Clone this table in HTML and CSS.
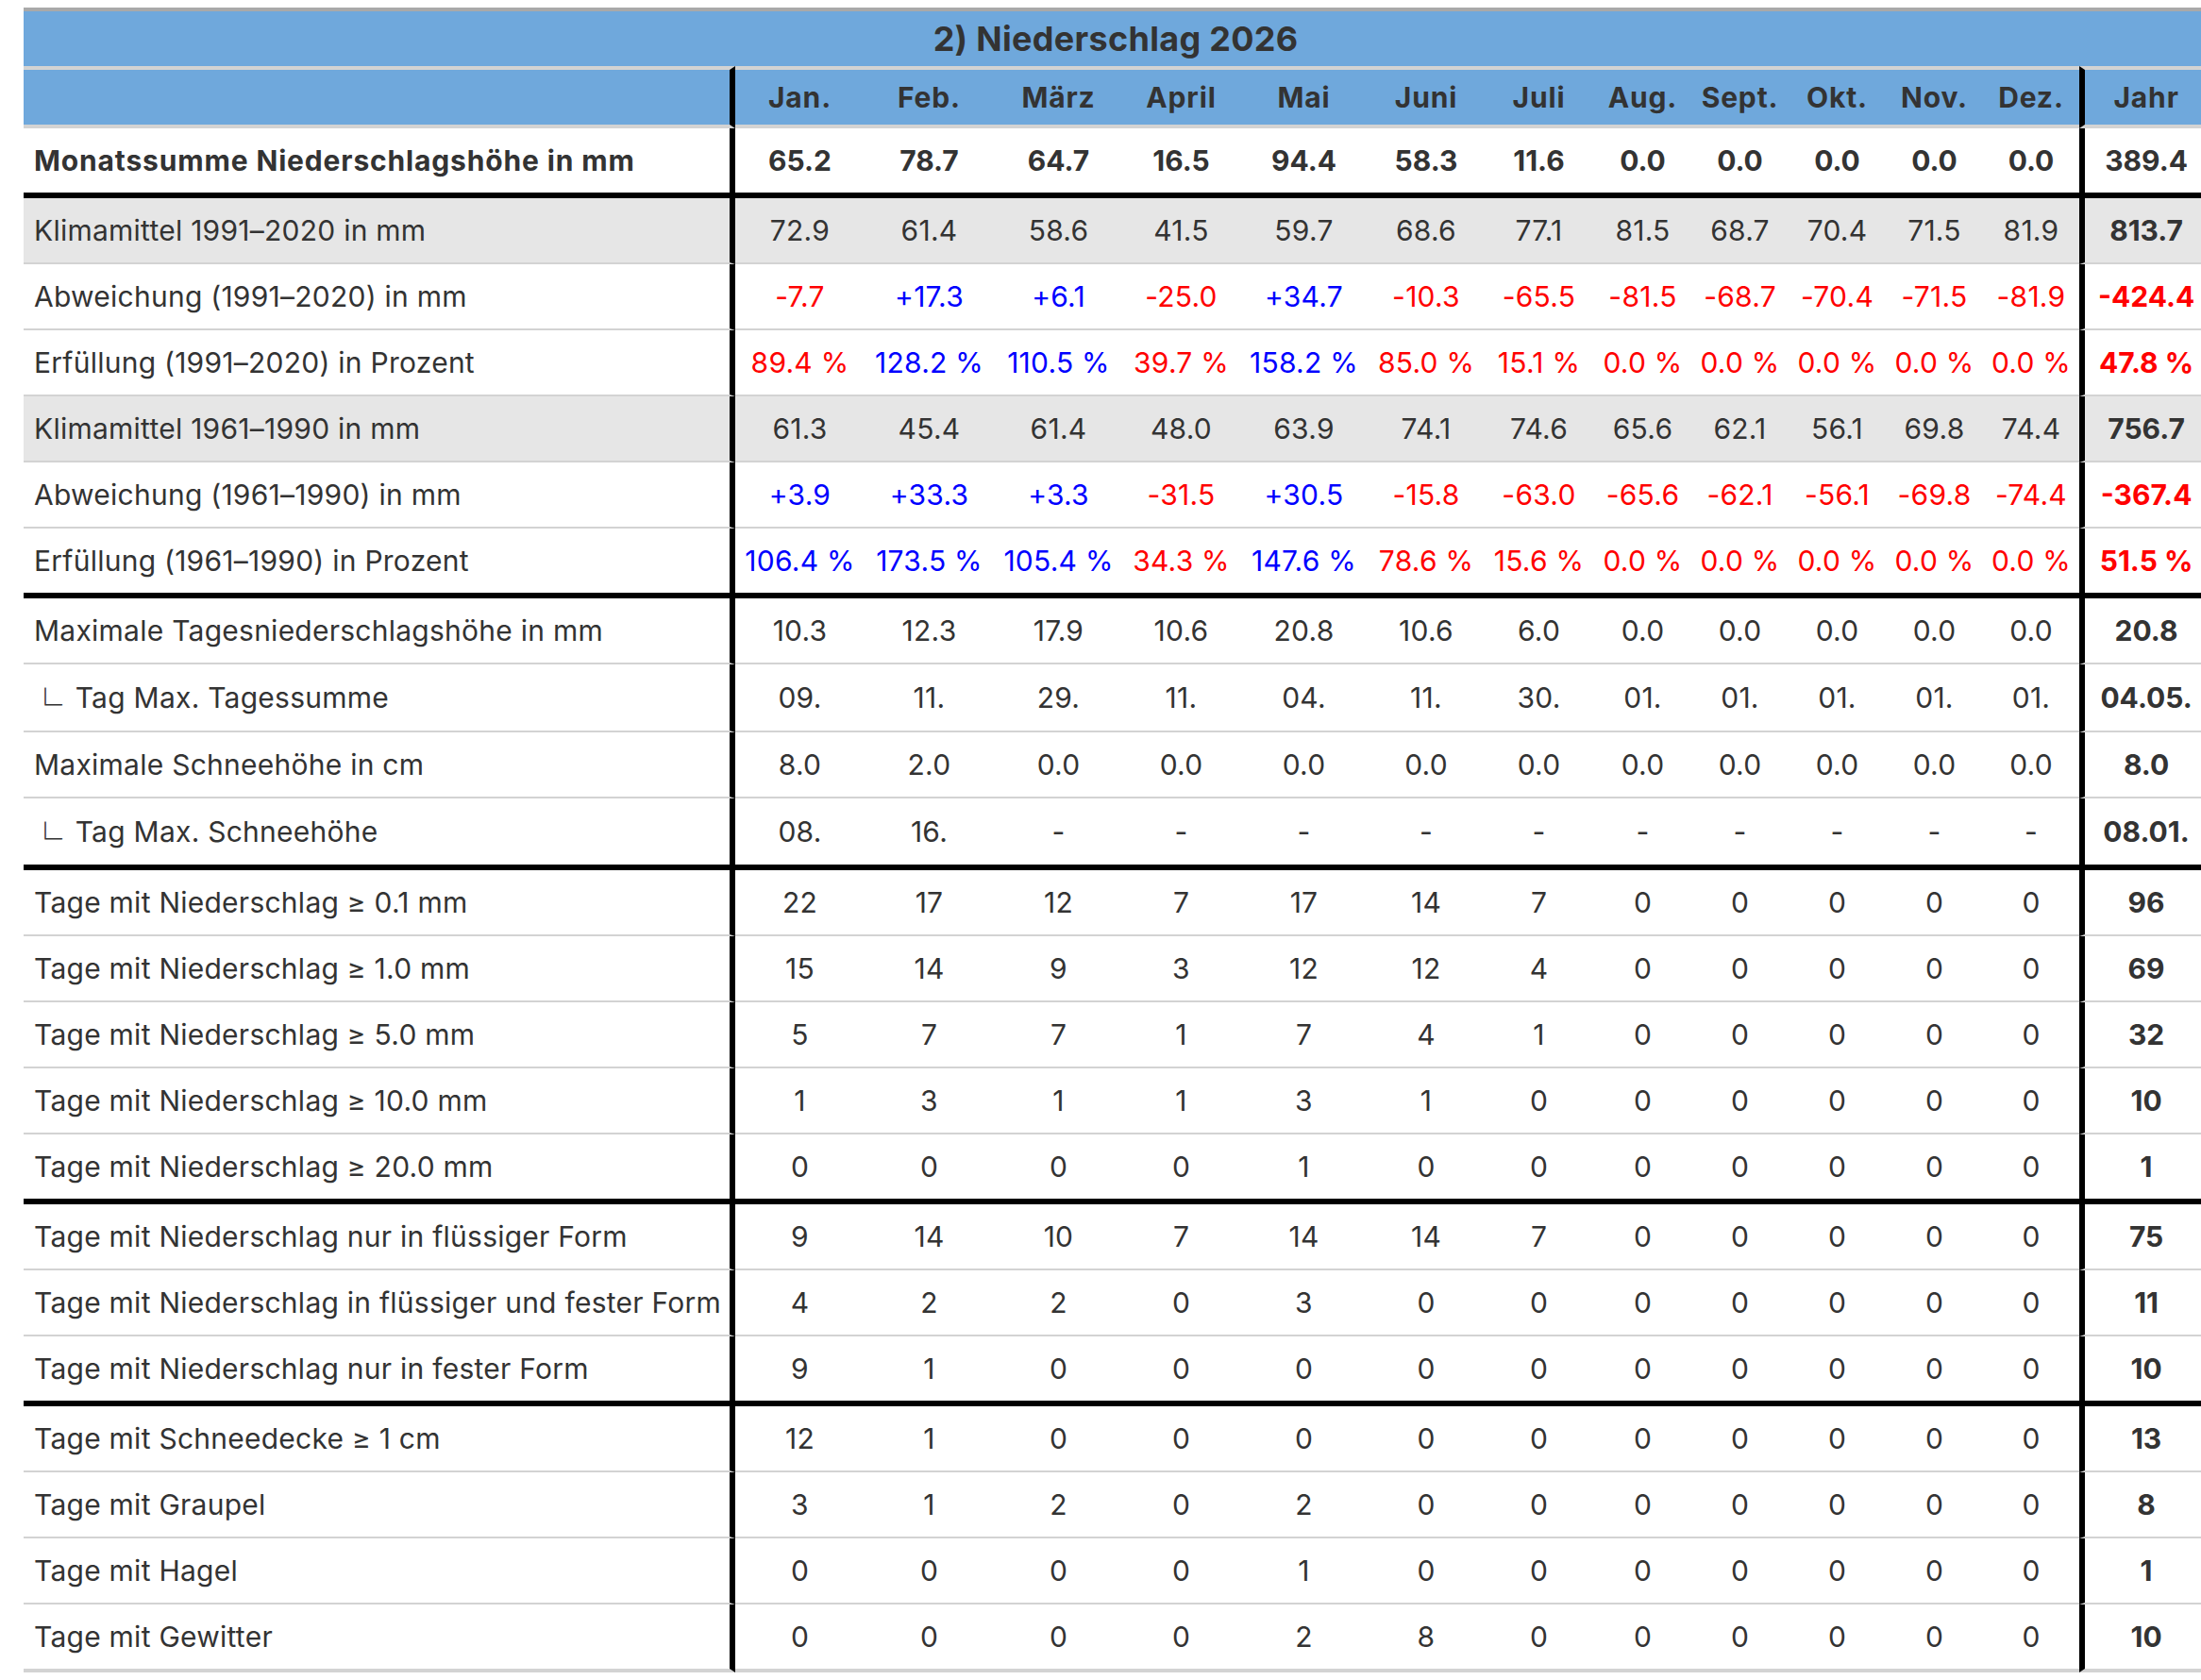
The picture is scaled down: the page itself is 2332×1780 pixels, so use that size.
FILE: index.html
```html
<!DOCTYPE html>
<html lang="de">
<head>
<meta charset="utf-8">
<title>2) Niederschlag 2026</title>
<link rel="stylesheet" href="styles.css">
</head>
<body>
<div class="wrap">
<table class="clim">
<colgroup>
<col class="c-lab"><col class="c-a"><col class="c-a"><col class="c-a"><col class="c-b1"><col class="c-a"><col class="c-b2"><col class="c-b3"><col class="c-c"><col class="c-c"><col class="c-c"><col class="c-c"><col class="c-d"><col class="c-yr">
</colgroup>
<thead>
<tr class="title"><th colspan="14">2) Niederschlag 2026</th></tr>
<tr class="head"><th class="lab"></th><th>Jan.</th><th>Feb.</th><th>März</th><th>April</th><th>Mai</th><th>Juni</th><th>Juli</th><th>Aug.</th><th>Sept.</th><th>Okt.</th><th>Nov.</th><th>Dez.</th><th class="yr">Jahr</th></tr>
</thead>
<tbody>
<tr class="sum end"><td class="lab">Monatssumme Niederschlagshöhe in mm</td><td>65.2</td><td>78.7</td><td>64.7</td><td>16.5</td><td>94.4</td><td>58.3</td><td>11.6</td><td>0.0</td><td>0.0</td><td>0.0</td><td>0.0</td><td>0.0</td><td class="yr">389.4</td></tr>

<tr class="g"><td class="lab">Klimamittel 1991–2020 in mm</td><td>72.9</td><td>61.4</td><td>58.6</td><td>41.5</td><td>59.7</td><td>68.6</td><td>77.1</td><td>81.5</td><td>68.7</td><td>70.4</td><td>71.5</td><td>81.9</td><td class="yr">813.7</td></tr>
<tr><td class="lab">Abweichung (1991–2020) in mm</td><td class="r">-7.7</td><td class="b">+17.3</td><td class="b">+6.1</td><td class="r">-25.0</td><td class="b">+34.7</td><td class="r">-10.3</td><td class="r">-65.5</td><td class="r">-81.5</td><td class="r">-68.7</td><td class="r">-70.4</td><td class="r">-71.5</td><td class="r">-81.9</td><td class="yr r">-424.4</td></tr>
<tr><td class="lab">Erfüllung (1991–2020) in Prozent</td><td class="r">89.4 %</td><td class="b">128.2 %</td><td class="b">110.5 %</td><td class="r">39.7 %</td><td class="b">158.2 %</td><td class="r">85.0 %</td><td class="r">15.1 %</td><td class="r">0.0 %</td><td class="r">0.0 %</td><td class="r">0.0 %</td><td class="r">0.0 %</td><td class="r">0.0 %</td><td class="yr r">47.8 %</td></tr>
<tr class="g"><td class="lab">Klimamittel 1961–1990 in mm</td><td>61.3</td><td>45.4</td><td>61.4</td><td>48.0</td><td>63.9</td><td>74.1</td><td>74.6</td><td>65.6</td><td>62.1</td><td>56.1</td><td>69.8</td><td>74.4</td><td class="yr">756.7</td></tr>
<tr><td class="lab">Abweichung (1961–1990) in mm</td><td class="b">+3.9</td><td class="b">+33.3</td><td class="b">+3.3</td><td class="r">-31.5</td><td class="b">+30.5</td><td class="r">-15.8</td><td class="r">-63.0</td><td class="r">-65.6</td><td class="r">-62.1</td><td class="r">-56.1</td><td class="r">-69.8</td><td class="r">-74.4</td><td class="yr r">-367.4</td></tr>
<tr class="end"><td class="lab">Erfüllung (1961–1990) in Prozent</td><td class="b">106.4 %</td><td class="b">173.5 %</td><td class="b">105.4 %</td><td class="r">34.3 %</td><td class="b">147.6 %</td><td class="r">78.6 %</td><td class="r">15.6 %</td><td class="r">0.0 %</td><td class="r">0.0 %</td><td class="r">0.0 %</td><td class="r">0.0 %</td><td class="r">0.0 %</td><td class="yr r">51.5 %</td></tr>

<tr><td class="lab">Maximale Tagesniederschlagshöhe in mm</td><td>10.3</td><td>12.3</td><td>17.9</td><td>10.6</td><td>20.8</td><td>10.6</td><td>6.0</td><td>0.0</td><td>0.0</td><td>0.0</td><td>0.0</td><td>0.0</td><td class="yr">20.8</td></tr>
<tr class="tall"><td class="lab"><span class="sub">└</span> Tag Max. Tagessumme</td><td>09.</td><td>11.</td><td>29.</td><td>11.</td><td>04.</td><td>11.</td><td>30.</td><td>01.</td><td>01.</td><td>01.</td><td>01.</td><td>01.</td><td class="yr">04.05.</td></tr>
<tr><td class="lab">Maximale Schneehöhe in cm</td><td>8.0</td><td>2.0</td><td>0.0</td><td>0.0</td><td>0.0</td><td>0.0</td><td>0.0</td><td>0.0</td><td>0.0</td><td>0.0</td><td>0.0</td><td>0.0</td><td class="yr">8.0</td></tr>
<tr class="tall end"><td class="lab"><span class="sub">└</span> Tag Max. Schneehöhe</td><td>08.</td><td>16.</td><td>-</td><td>-</td><td>-</td><td>-</td><td>-</td><td>-</td><td>-</td><td>-</td><td>-</td><td>-</td><td class="yr">08.01.</td></tr>

<tr><td class="lab">Tage mit Niederschlag ≥ 0.1 mm</td><td>22</td><td>17</td><td>12</td><td>7</td><td>17</td><td>14</td><td>7</td><td>0</td><td>0</td><td>0</td><td>0</td><td>0</td><td class="yr">96</td></tr>
<tr><td class="lab">Tage mit Niederschlag ≥ 1.0 mm</td><td>15</td><td>14</td><td>9</td><td>3</td><td>12</td><td>12</td><td>4</td><td>0</td><td>0</td><td>0</td><td>0</td><td>0</td><td class="yr">69</td></tr>
<tr><td class="lab">Tage mit Niederschlag ≥ 5.0 mm</td><td>5</td><td>7</td><td>7</td><td>1</td><td>7</td><td>4</td><td>1</td><td>0</td><td>0</td><td>0</td><td>0</td><td>0</td><td class="yr">32</td></tr>
<tr><td class="lab">Tage mit Niederschlag ≥ 10.0 mm</td><td>1</td><td>3</td><td>1</td><td>1</td><td>3</td><td>1</td><td>0</td><td>0</td><td>0</td><td>0</td><td>0</td><td>0</td><td class="yr">10</td></tr>
<tr class="end"><td class="lab">Tage mit Niederschlag ≥ 20.0 mm</td><td>0</td><td>0</td><td>0</td><td>0</td><td>1</td><td>0</td><td>0</td><td>0</td><td>0</td><td>0</td><td>0</td><td>0</td><td class="yr">1</td></tr>

<tr><td class="lab">Tage mit Niederschlag nur in flüssiger Form</td><td>9</td><td>14</td><td>10</td><td>7</td><td>14</td><td>14</td><td>7</td><td>0</td><td>0</td><td>0</td><td>0</td><td>0</td><td class="yr">75</td></tr>
<tr><td class="lab">Tage mit Niederschlag in flüssiger und fester Form</td><td>4</td><td>2</td><td>2</td><td>0</td><td>3</td><td>0</td><td>0</td><td>0</td><td>0</td><td>0</td><td>0</td><td>0</td><td class="yr">11</td></tr>
<tr class="end"><td class="lab">Tage mit Niederschlag nur in fester Form</td><td>9</td><td>1</td><td>0</td><td>0</td><td>0</td><td>0</td><td>0</td><td>0</td><td>0</td><td>0</td><td>0</td><td>0</td><td class="yr">10</td></tr>

<tr><td class="lab">Tage mit Schneedecke ≥ 1 cm</td><td>12</td><td>1</td><td>0</td><td>0</td><td>0</td><td>0</td><td>0</td><td>0</td><td>0</td><td>0</td><td>0</td><td>0</td><td class="yr">13</td></tr>
<tr><td class="lab">Tage mit Graupel</td><td>3</td><td>1</td><td>2</td><td>0</td><td>2</td><td>0</td><td>0</td><td>0</td><td>0</td><td>0</td><td>0</td><td>0</td><td class="yr">8</td></tr>
<tr><td class="lab">Tage mit Hagel</td><td>0</td><td>0</td><td>0</td><td>0</td><td>1</td><td>0</td><td>0</td><td>0</td><td>0</td><td>0</td><td>0</td><td>0</td><td class="yr">1</td></tr>
<tr class="last"><td class="lab">Tage mit Gewitter</td><td>0</td><td>0</td><td>0</td><td>0</td><td>2</td><td>8</td><td>0</td><td>0</td><td>0</td><td>0</td><td>0</td><td>0</td><td class="yr">10</td></tr>
</tbody>
</table>
</div>
</body>
</html>
```

FILE: styles.css
```css
html, body {
  margin: 0;
  padding: 0;
  background: #ffffff;
  overflow: hidden;
}

.wrap {
  width: 2332px;
  box-sizing: border-box;
  padding: 8px 0 0 25px;
  overflow: hidden;
}

.clim {
  border-collapse: separate;
  border-spacing: 0;
  table-layout: fixed;
  width: 2314px;
  font-family: Inter, "Noto Sans", "DejaVu Sans", sans-serif;
  font-size: 30px;
  letter-spacing: 0.25px;
  line-height: 1;
  color: #333333;
}

.c-lab { width: 754px; }
.c-a { width: 137px; }
.c-b1 { width: 123px; }
.c-b2 { width: 122px; }
.c-b3 { width: 117px; }
.c-c { width: 103px; }
.c-d { width: 102px; }
.c-yr { width: 136px; }

.clim th,
.clim td {
  box-sizing: border-box;
  padding: 0;
  text-align: center;
  vertical-align: middle;
  white-space: nowrap;
  overflow: hidden;
}

.clim td {
  height: 70px;
  border-bottom: 2px solid #d3d3d3;
  font-weight: 400;
}

.title th {
  height: 62px;
  background: #6fa8dc;
  border-top: 4px solid #a9a9a9;
  font-size: 36px;
  font-weight: 700;
  letter-spacing: 0.3px;
  color: #333333;
}

.head th {
  height: 66px;
  background: #6fa8dc;
  border-top: 4px solid #d3d3d3;
  border-bottom: 4px solid #d3d3d3;
  font-weight: 700;
  letter-spacing: 0.85px;
  color: #333333;
}

.clim .lab {
  text-align: left;
  padding-left: 11px;
  border-right: 6px solid #000000;
}

.clim td.yr {
  border-left: 6px solid #000000;
  font-weight: 700;
  letter-spacing: 0;
}

.clim th.yr {
  border-left: 6px solid #000000;
}

.sum td {
  font-weight: 700;
  letter-spacing: 0;
}

.clim .sum td.lab {
  letter-spacing: 0.85px;
}

.g td {
  background: #e6e6e6;
}

.clim tr.end td {
  height: 74px;
  border-bottom: 6px solid #000000;
}

.clim tr.tall td {
  height: 72px;
}

.clim tr.tall.end td {
  height: 76px;
}

.clim tr.last td {
  height: 72px;
  border-bottom: 4px solid #d3d3d3;
}

.sub {
  display: inline-block;
  margin-left: -6px;
  margin-right: 5px;
  font-family: "Noto Sans CJK JP", "DejaVu Sans", sans-serif;
  font-size: 36px;
  font-weight: 400;
  line-height: 0;
  letter-spacing: 0;
  transform: translateY(11px);
}

.r { color: #ff0000; }
.b { color: #0000ff; }
```
